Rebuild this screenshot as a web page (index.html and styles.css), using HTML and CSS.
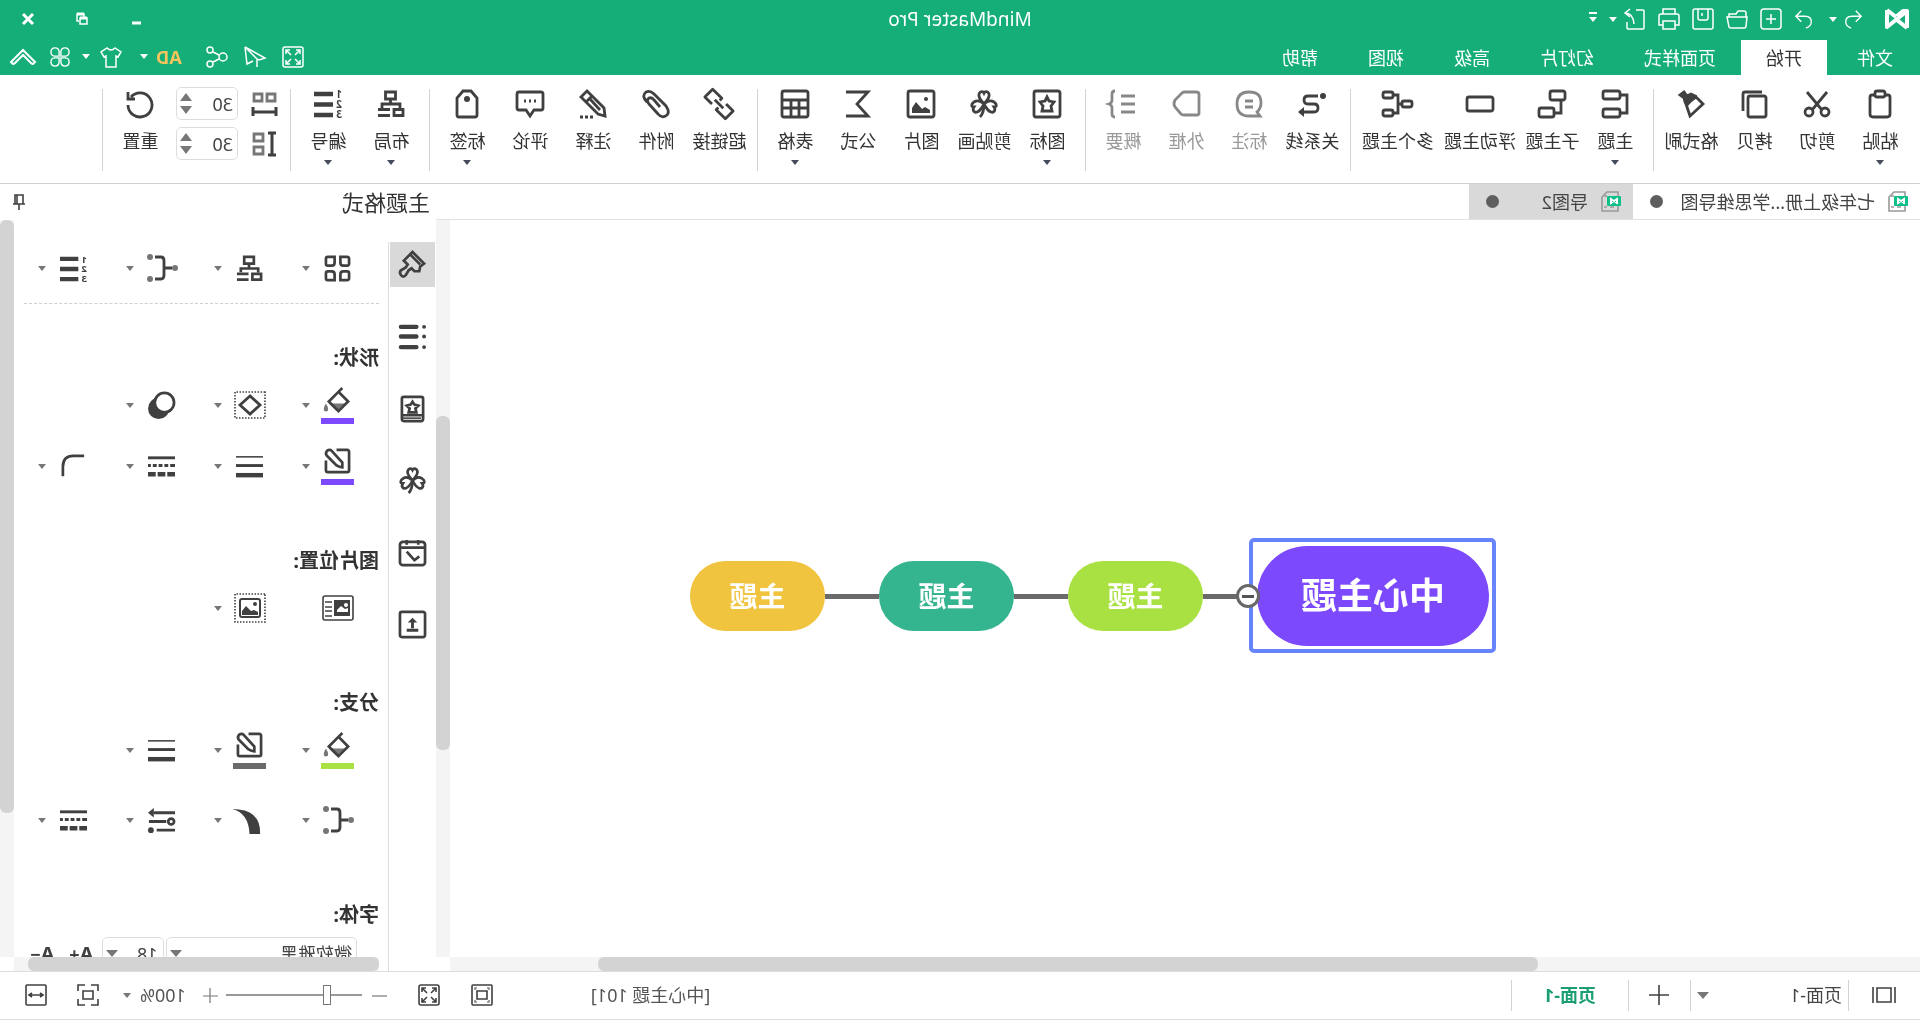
FILE: index.html
```html
<!DOCTYPE html>
<html lang="zh-CN">
<head>
<meta charset="utf-8">
<title>MindMaster Pro</title>
<link rel="stylesheet" href="styles.css">
</head>
<body>
<svg class="sprite" aria-hidden="true">
  <symbol id="i-layout" viewBox="0 0 28 28"><path d="M9.500 2h10v7h-10zM14.500 9v5M5 18v-4h18v4M2 19.500h9v6H2z"/><path d="M15 19.500h12M15 25.500h12"/></symbol>
  <symbol id="i-number" viewBox="0 0 28 28"><path class="thick" d="M9 4h19M9 14.500h19M9 25h19"/><text x="0" y="8">1</text><text x="0" y="18">2</text><text x="0" y="28">3</text></symbol>
  <symbol id="i-clover" viewBox="0 0 28 28"><path d="M14 14C11 10 8 8 9 4c1-3 4-3 5-1 1-2 4-2 5 1 1 4-2 6-5 10zM14 14c-3-3-7-4-10-2-3 2-3 5 0 5-2 3 0 6 3 5 3-1 5-4 7-8zM14 14c3-3 7-4 10-2 3 2 3 5 0 5 2 3 0 6-3 5-3-1-5-4-7-8z"/><path d="M14 14c0 5 1 10 4 13"/></symbol>
  <symbol id="i-bucket" viewBox="0 0 28 28"><path class="soft" d="M6 17h17l-8 8z"/><path d="M9 1l3 3 1 3M13 5L3 15l10 10 10-10L13 5z"/><path class="soft" d="M26 17q-3 5-2 7 2 3 4 0 1-2-2-7z"/></symbol>
  <symbol id="i-border" viewBox="0 0 28 28"><path d="M15 2H4Q2 2 2 4v19q0 2 2 2h20q2 0 2-2V13M20 3q2-2 5 0 2 3 0 5L15 18q-3 2-6 2v-5z"/></symbol>
  <symbol id="i-weights" viewBox="0 0 28 28"><path class="thin" d="M0 4h28"/><path class="w3" d="M0 13h28"/><path class="thick" d="M0 23h28"/></symbol>
  <symbol id="i-dashes" viewBox="0 0 28 28"><path class="w3" d="M0 5h28"/><path class="w3" d="M0 13h5M7 13h4M13 13h4M19 13h4M25 13h3"/><path class="thick" d="M0 22h8M10 22h8M20 22h8"/></symbol>
  <symbol id="i-branch" viewBox="0 0 30 28"><path d="M5 14h8M22 3h-6q-3 0-3 4v14q0 4 3 4h6"/><circle class="soft" cx="2" cy="14" r="3"/><circle class="soft" cx="27" cy="3" r="3"/><circle class="soft" cx="27" cy="25" r="3"/></symbol>
  <symbol id="i-doc" viewBox="0 0 20 22"><path class="page" d="M7 1h7l5 5v14H3V1z"/><path class="page" d="M7 16h4M14 16h3M14 5l3 0"/><rect class="badge" x="0" y="5" width="14" height="10" rx="1"/><path class="mark" d="M4 13V8l6 4V7M4 12l6-4v5"/></symbol>
  <symbol id="i-expand" viewBox="0 0 22 22"><rect x="1" y="1" width="20" height="20" rx="2"/><path d="M4 8V4h4M4 4l5 5M14 4h4v4M18 4l-5 5M4 14v4h4M4 18l5-5M18 14v4h-4M18 18l-5-5"/></symbol>
</svg>
<div class="window">
  <header class="top">
    <div class="titlebar">
      <div class="quick">
        <svg class="logo" viewBox="0 0 24 22"><path d="M2 20V3l20 16V2M2 3l4 0 6 5M2 20l10-8M22 2l-9 7"/></svg>
        <button aria-label="撤销"><svg viewBox="0 0 20 22"><path d="M7 2L1 8l6 6M1 8h10q7 0 7 6 0 5-6 7"/></svg></button>
        <i class="caret q1"></i>
        <button aria-label="重做"><svg viewBox="0 0 20 22"><path d="M13 2l6 6-6 6M19 8H9Q2 8 2 14q0 5 6 7"/></svg></button>
        <button class="q2" aria-label="新建"><svg viewBox="0 0 22 22"><rect x="1" y="1" width="20" height="20" rx="3"/><path d="M11 6v10M6 11h10"/></svg></button>
        <button aria-label="打开"><svg viewBox="0 0 22 22"><path d="M2 9V5q0-2 2-2h6l2 3h7v3M1 9h20l-2 10q0 1-2 1H4q-2 0-2-2z"/></svg></button>
        <button aria-label="保存"><svg viewBox="0 0 22 22"><rect x="1" y="1" width="20" height="20" rx="2"/><path d="M6 1v9q0 2 2 2h6q2 0 2-2V1M12 5v3"/></svg></button>
        <button aria-label="打印"><svg viewBox="0 0 22 22"><path d="M5 6V1h12v5M5 17H1V8q0-2 2-2h16q2 0 2 2v9h-4M5 13h12v8H5z"/></svg></button>
        <button aria-label="导出"><svg viewBox="0 0 22 22"><path d="M10 2H3q-1 0-1 1v17q0 1 1 1h15q1 0 1-1v-6M16 1l5 4-5 4M21 5Q13 5 12 16"/></svg></button>
        <i class="caret q3"></i>
        <i class="caret topped"></i>
      </div>
      <h1>MindMaster Pro</h1>
      <div class="wincontrols">
        <button aria-label="最小化"><svg viewBox="0 0 12 14"><path class="heavy" d="M1 11h9"/></svg></button>
        <button aria-label="还原"><svg viewBox="0 0 12 14"><path d="M1 6h7v6H1zM4 5V2h7v7H9"/><path class="heavy" d="M4 2h7M1 6h7"/></svg></button>
        <button aria-label="关闭"><svg viewBox="0 0 12 14"><path class="heavy" d="M1 2l10 10M11 2L1 12"/></svg></button>
      </div>
    </div>
    <div class="menubar">
      <nav class="menus">
        <a href="#">文件</a><a href="#" class="active">开始</a><a href="#">页面样式</a><a href="#">幻灯片</a><a href="#">高级</a><a href="#">视图</a><a href="#">帮助</a>
      </nav>
      <div class="tools">
        <button aria-label="全屏"><svg viewBox="0 0 22 22"><use href="#i-expand"/></svg></button>
        <button aria-label="发送"><svg viewBox="0 0 22 22"><path d="M21 1L1 12l6 2 2-1v8M21 1L9 13M21 1l-2 17-6-3"/></svg></button>
        <button aria-label="分享"><svg viewBox="0 0 22 22"><circle cx="5" cy="11" r="4"/><circle cx="18" cy="4" r="3"/><circle cx="18" cy="18" r="3"/><path d="M9 9l6-3M9 13l6 3"/></svg></button>
        <b class="ad">AD</b><i class="caret"></i>
        <button class="shirt" aria-label="主题"><svg viewBox="0 0 22 22"><path d="M7 2L1 6l3 5 2-1v11h10V10l2 1 3-5-6-4q-4 4-8 0z"/></svg></button>
        <i class="caret"></i>
        <button class="apps" aria-label="应用"><svg viewBox="0 0 22 22"><path d="M10 10H5a4.500 4.500 0 1 1 5-5zM12 10V5a4.500 4.500 0 1 1 5 5zM10 12v5a4.500 4.500 0 1 1-5-5zM12 12h5a4.500 4.500 0 1 1-5 5z"/></svg></button>
        <button class="fold" aria-label="收起"><svg viewBox="0 0 26 18"><path d="M1 14L13 2l12 12-2 2q-1 0-2-1l-8-8-8 8q-1 1-2 1z"/></svg></button>
      </div>
    </div>
  </header>

  <div class="ribbon">
    <div class="group">
      <button class="cmd"><svg viewBox="0 0 28 28"><path d="M9 5H6Q4 5 4 7v17q0 3 3 3h14q3 0 3-3V7q0-2-2-2h-3"/><rect x="9" y="1" width="10" height="6" rx="2"/></svg>粘贴<i class="caret"></i></button>
      <button class="cmd"><svg viewBox="0 0 28 28"><path d="M4 2l15 18M24 2L9 20"/><circle cx="6" cy="22" r="4"/><circle cx="22" cy="22" r="4"/></svg>剪切</button>
      <button class="cmd"><svg viewBox="0 0 28 28"><rect x="2" y="6" width="18" height="21" rx="2"/><path d="M6 2h17q2 0 2 2v17"/></svg>拷贝</button>
      <button class="cmd"><svg viewBox="0 0 28 28"><path d="M9 7L2 14l13 12 4-12z"/><path class="fill stroked" d="M10 6l8 9 2-3 1-4 4-3-4-3-3 4-4-2z"/></svg>格式刷</button>
    </div>
    <div class="group">
      <button class="cmd"><svg viewBox="0 0 28 28"><rect x="9" y="1" width="17" height="8" rx="2"/><rect x="9" y="19" width="17" height="8" rx="2"/><path d="M9 5H2v18h7"/></svg>主题<i class="caret"></i></button>
      <button class="cmd"><svg viewBox="0 0 28 28"><rect x="1" y="1" width="15" height="9" rx="2"/><rect x="12" y="18" width="15" height="9" rx="2"/><path d="M5 10v13h7"/></svg>子主题</button>
      <button class="cmd wide"><svg viewBox="0 0 28 28"><rect x="1" y="7" width="26" height="14" rx="2"/></svg>浮动主题</button>
      <button class="cmd wide"><svg viewBox="0 0 28 28"><rect x="0" y="11" width="10" height="6" rx="2"/><rect x="19" y="2" width="10" height="6" rx="2"/><rect x="19" y="20" width="10" height="6" rx="2"/><path d="M10 14h4M19 5h-5v18h5"/></svg>多个主题</button>
    </div>
    <div class="group">
      <button class="cmd"><svg viewBox="0 0 28 28"><circle class="fill" cx="3" cy="6" r="3"/><path d="M8 6h10q4 0 4 4t-4 4h-6q-4 0-4 4t4 4h12"/><path class="fill" d="M22 17l6 5-6 5z"/></svg>关系线</button>
      <button class="cmd" disabled><svg viewBox="0 0 28 28"><path d="M3 26l3-4Q2 18 2 13 2 2 14 2t12 12q0 12-12 12z"/><path d="M10 11h8M10 17h8"/></svg>标注</button>
      <button class="cmd" disabled><svg viewBox="0 0 28 28"><path d="M4 2h11q2 0 3 1l7 7q2 4 0 7l-6 7q-1 1-3 1H3q-2 0-2-2V4q0-2 3-2z"/></svg>外框</button>
      <button class="cmd" disabled><svg viewBox="0 0 28 28"><path d="M2 6h14M2 14h14M2 22h14M22 1q3 0 3 3v6q0 3 3 4-3 1-3 4v6q0 3-3 3"/></svg>概要</button>
    </div>
    <div class="group">
      <button class="cmd"><svg viewBox="0 0 28 28"><rect x="1" y="1" width="26" height="26" rx="2"/><path d="M14 7l2 4 5 1-3 4 1 5h-10l1-5-3-4 5-1z"/></svg>图标<i class="caret"></i></button>
      <button class="cmd"><svg viewBox="0 0 28 28"><use href="#i-clover"/></svg>剪贴画</button>
      <button class="cmd"><svg viewBox="0 0 28 28"><rect x="1" y="1" width="26" height="26" rx="2"/><path class="fill" d="M5 23v-3l5-3 3 2 6-7 4 6v5z"/><circle class="fill" cx="9" cy="9" r="2"/></svg>图片</button>
      <button class="cmd"><svg viewBox="0 0 28 28"><path d="M26 2H4l11 12L4 26h22"/></svg>公式</button>
      <button class="cmd"><svg viewBox="0 0 28 28"><rect x="1" y="1" width="26" height="26" rx="2"/><path d="M1 10h26M1 18h26M10 10v17M18 10v17"/></svg>表格<i class="caret"></i></button>
    </div>
    <div class="group">
      <button class="cmd"><svg viewBox="0 0 28 28"><path transform="rotate(-45 14 14)" stroke-linejoin="round" d="M12 17v3H-1V9h10M16 11V8h13v11H19M8 14h12"/></svg>超链接</button>
      <button class="cmd"><svg viewBox="0 0 28 28"><path d="M23 12q6-6 1-10-4-2-8 2L4 16q-4 6-1 9 5 4 9-1l9-10q3-4 0-6-3-1-5 2l-6 7"/></svg>附件</button>
      <button class="cmd"><svg viewBox="0 0 28 28"><path d="M20 1l6 6L9 24l-7 2 1-8zM15 6l6 6M17 9L7 20"/><path d="M14 27h3M19 27h3M24 27h3"/></svg>注释</button>
      <button class="cmd"><svg viewBox="0 0 28 28"><path d="M3 2h22q2 0 2 2v14q0 2-2 2h-7l-4 6-4-6H3q-2 0-2-2V4q0-2 2-2z"/><path class="dots" d="M8 11h2M13 11h2M18 11h2"/></svg>评论</button>
      <button class="cmd"><svg viewBox="0 0 28 28"><path d="M10 1h8l6 7v17q0 2-2 2H6q-2 0-2-2V8z"/><circle class="fill" cx="14" cy="9" r="3"/></svg>标签<i class="caret"></i></button>
    </div>
    <div class="group">
      <button class="cmd"><svg viewBox="0 0 28 28"><use href="#i-layout"/></svg>布局<i class="caret"></i></button>
      <button class="cmd"><svg viewBox="0 0 28 28"><use href="#i-number"/></svg>编号<i class="caret"></i></button>
    </div>
    <div class="group">
      <div class="spacing">
        <label class="spin"><svg viewBox="0 0 26 26"><path class="grey" d="M2 3h8v7H2zM15 3h8v7h-8z"/><path class="w3" d="M1 16v9M24 16v9M1 21h23"/></svg><span><input type="text" value="30" aria-label="水平间距"><i class="caret up"></i><i class="caret down"></i></span></label>
        <label class="spin"><svg viewBox="0 0 26 26"><path class="grey" d="M14 3h9v7h-9zM14 16h9v7h-9z"/><path class="w3" d="M1 2h8M1 24h8M5 2v22"/></svg><span><input type="text" value="30" aria-label="垂直间距"><i class="caret up"></i><i class="caret down"></i></span></label>
      </div>
      <button class="cmd"><svg viewBox="0 0 28 28"><path d="M23 7A12 12 0 1 0 26 15M26 2v7h-7"/></svg>重置</button>
    </div>
  </div>

  <main class="main">
    <section class="work">
      <div class="doctabs">
        <button class="doctab first"><svg viewBox="0 0 20 22"><use href="#i-doc"/></svg><span>七年级上册...学思维导图</span><i class="dot"></i></button>
        <button class="doctab second"><svg viewBox="0 0 20 22"><use href="#i-doc"/></svg><span>导图2</span><i class="dot"></i></button>
      </div>
      <div class="canvasgrid">
        <div class="canvas">
          <div class="mindmap">
            <div class="node central">中心主题</div>
            <i class="link short"></i><div class="node lime">主题</div>
            <i class="link"></i><div class="node teal">主题</div>
            <i class="link"></i><div class="node gold">主题</div>
            <div class="selection"></div>
            <button class="collapse" aria-label="折叠"></button>
          </div>
        </div>
        <div class="vtrack"><div class="thumb canvas-v"></div></div>
        <div class="htrack"><div class="thumb canvas-h"></div></div>
      </div>
    </section>

    <aside class="panel">
      <div class="panelhead"><h2>主题格式</h2><button aria-label="固定"><svg viewBox="0 0 14 16"><path d="M3 1h8v9H3zM1 10h12M7 10v6M9 1v9"/></svg></button></div>
      <div class="panelbody">
        <div class="side">
          <button class="on" aria-label="格式"><svg viewBox="0 0 28 28"><path d="M14 1L2 13l4 3 1 5 5 0 3-3 3 2 3 5q3 3 5 0t0-5l-5-3-2-3 4-4z"/><path d="M16 4L6 14"/></svg></button>
          <button aria-label="大纲"><svg viewBox="0 0 28 28"><path class="thick round" d="M10 4h16M10 14h16M10 25h16"/><circle class="fill" cx="2" cy="4" r="2"/><circle class="fill" cx="2" cy="14" r="2"/><circle class="fill" cx="2" cy="25" r="2"/></svg></button>
          <button aria-label="图标"><svg viewBox="0 0 28 28"><rect x="3" y="2" width="22" height="25" rx="2"/><path d="M3 21h22M14 7l2 3 4 1-3 3 1 4h-8l1-4-3-3 4-1z"/><path class="thin" d="M5 24h20"/></svg></button>
          <button aria-label="剪贴画"><svg viewBox="0 0 28 28"><use href="#i-clover"/></svg></button>
          <button aria-label="任务"><svg viewBox="0 0 28 28"><rect x="1" y="3" width="26" height="24" rx="3"/><path d="M1 9h26M8 1v5M20 1v5M7 18l5 4 8-9"/></svg></button>
          <button aria-label="导出"><svg viewBox="0 0 28 28"><rect x="1" y="1" width="26" height="26" rx="2"/><path class="w3" d="M8 20h12M14 18V9"/><path class="fill" d="M9 12l5-5 5 5z"/></svg></button>
        </div>
        <div class="props">
          <div class="row">
            <button class="tool" aria-label="样式"><span><svg viewBox="0 0 28 28"><path d="M2 4q0-2 2-2h7v6q0 3-3 3H4q-2 0-2-2zM17 2h7q2 0 2 2v5q0 2-2 2h-4q-3 0-3-3zM4 17h4q3 0 3 3v6H4q-2 0-2-2v-5q0-2 2-2zM20 17h4q2 0 2 2v5q0 2-2 2h-7v-6q0-3 3-3z"/></svg></span><i class="caret"></i></button>
            <button class="tool" aria-label="布局"><span><svg viewBox="0 0 28 28"><use href="#i-layout"/></svg></span><i class="caret"></i></button>
            <button class="tool" aria-label="连线"><span><svg class="w30" viewBox="0 0 30 28"><use href="#i-branch"/></svg></span><i class="caret"></i></button>
            <button class="tool" aria-label="编号"><span><svg viewBox="0 0 28 28"><use href="#i-number"/></svg></span><i class="caret"></i></button>
          </div>
          <hr>
          <h3>形状:</h3>
          <div class="row">
            <button class="tool" aria-label="填充"><span><svg viewBox="0 0 28 28"><use href="#i-bucket"/></svg><b class="bar violet"></b></span><i class="caret"></i></button>
            <button class="tool" aria-label="形状"><span><svg class="w32" viewBox="0 0 32 28"><rect class="dotline" x="1" y="1" width="30" height="26"/><path d="M16 5l10 9-10 9-10-9z"/></svg></span><i class="caret"></i></button>
            <button class="tool" aria-label="阴影"><span><svg viewBox="0 0 28 28"><circle class="fill" cx="17" cy="17" r="11"/><circle class="paper" cx="11" cy="11" r="10"/></svg></span><i class="caret"></i></button>
          </div>
          <div class="row near">
            <button class="tool" aria-label="边框颜色"><span><svg viewBox="0 0 28 28"><use href="#i-border"/></svg><b class="bar violet"></b></span><i class="caret"></i></button>
            <button class="tool" aria-label="边框粗细"><span><svg viewBox="0 0 28 28"><use href="#i-weights"/></svg></span><i class="caret"></i></button>
            <button class="tool" aria-label="边框线型"><span><svg viewBox="0 0 28 28"><use href="#i-dashes"/></svg></span><i class="caret"></i></button>
            <button class="tool" aria-label="圆角"><span><svg viewBox="0 0 28 28"><path d="M3 3h11q11 0 11 11v10"/></svg></span><i class="caret"></i></button>
          </div>
          <h3>图片位置:</h3>
          <div class="row">
            <button class="tool" aria-label="图片布局"><span><svg class="w32" viewBox="0 0 32 28"><rect class="thin" x="1" y="2" width="30" height="24" rx="2"/><path class="fill" d="M4 6h16v16H4z"/><path class="page-fill" d="M6 18v-4l3 1 4-3 4 4v2z"/><circle class="page-fill" cx="8" cy="11" r="2"/><path class="thin" d="M22 8h7M22 13h7M22 17h7M22 22h7"/></svg></span></button>
            <button class="tool" aria-label="图片大小"><span><svg class="w32" viewBox="0 0 32 28"><rect class="dotline" x="1" y="0" width="30" height="28"/><rect class="thin2" x="6" y="5" width="20" height="18" rx="2"/><path class="fill" d="M8 21v-3l4-2 3 1 5-5 4 5v4z"/><circle class="fill" cx="11" cy="10" r="2"/></svg></span><i class="caret"></i></button>
          </div>
          <h3>分支:</h3>
          <div class="row">
            <button class="tool" aria-label="分支填充"><span><svg viewBox="0 0 28 28"><use href="#i-bucket"/></svg><b class="bar limebar"></b></span><i class="caret"></i></button>
            <button class="tool" aria-label="分支颜色"><span><svg viewBox="0 0 28 28"><use href="#i-border"/></svg><b class="bar greybar"></b></span><i class="caret"></i></button>
            <button class="tool" aria-label="分支粗细"><span><svg viewBox="0 0 28 28"><use href="#i-weights"/></svg></span><i class="caret"></i></button>
          </div>
          <div class="row far">
            <button class="tool" aria-label="分支形状"><span><svg class="w30" viewBox="0 0 30 28"><use href="#i-branch"/></svg></span><i class="caret"></i></button>
            <button class="tool" aria-label="渐变线"><span><svg viewBox="0 0 28 28"><path class="fill" d="M3 28Q2 2 32 2 15 6 14 28z"/></svg></span><i class="caret"></i></button>
            <button class="tool" aria-label="箭头"><span><svg viewBox="0 0 28 28"><path class="w3" d="M0 6h22M9 15h18M0 24h19"/><circle cx="4" cy="15" r="3"/><circle class="fill" cx="25" cy="24" r="3"/><path class="fill" d="M22 1l6 5-6 5z"/></svg></span><i class="caret"></i></button>
            <button class="tool" aria-label="分支线型"><span><svg viewBox="0 0 28 28"><use href="#i-dashes"/></svg></span><i class="caret"></i></button>
          </div>
          <h3>字体:</h3>
          <div class="fonts">
            <span class="pick family"><select aria-label="字体"><option>微软雅黑</option></select><i class="caret"></i></span>
            <span class="pick size"><select aria-label="字号"><option>18</option></select><i class="caret"></i></span>
            <button class="sizer" aria-label="增大"><b>A</b><sup>+</sup></button>
            <button class="sizer" aria-label="减小"><b>A</b><sup>−</sup></button>
          </div>
        </div>
        <div class="vtrack"><div class="thumb panel-v"></div></div>
        <div class="htrack"><div class="thumb panel-h"></div></div>
      </div>
    </aside>
  </main>

  <footer class="status">
    <button class="s-outline" aria-label="页面列表"><svg viewBox="0 0 24 18"><path d="M1 1v16M23 1v16M5 2h14v14H5z"/></svg></button>
    <span class="pagepick"><select aria-label="页面"><option>页面-1</option></select><i class="caret"></i></span>
    <button class="s-add" aria-label="添加页面"><svg viewBox="0 0 20 20"><path d="M10 0v20M0 10h20"/></svg></button>
    <a href="#" class="s-page">页面-1</a>
    <div class="s-right">
      <span class="s-info">[中心主题 101]</span>
      <button class="s-fit" aria-label="适应"><svg viewBox="0 0 22 22"><rect x="1" y="1" width="20" height="20" rx="1"/><path d="M6 7h10v8H6z"/><path class="grey1" d="M4 6V4h2M16 4h2v2M4 16v2h2M16 18h2v-2"/></svg></button>
      <button class="s-full" aria-label="全屏"><svg viewBox="0 0 22 22"><use href="#i-expand"/></svg></button>
      <button class="s-minus" aria-label="缩小"><svg viewBox="0 0 15 15"><path class="hair" d="M0 8h15"/></svg></button>
      <input class="zoom" type="range" min="0" max="100" value="24" aria-label="缩放">
      <button class="s-plus" aria-label="放大"><svg viewBox="0 0 15 15"><path class="hair" d="M0 8h15M8 0v15"/></svg></button>
      <button class="s-pct">100%<i class="caret"></i></button>
      <button class="s-sel" aria-label="选区"><svg viewBox="0 0 22 22"><path d="M1 7V1h7M14 1h7v6M1 15v6h7M14 21h7v-6M6 7h10v8H6z"/></svg></button>
      <button class="s-width" aria-label="适合宽度"><svg viewBox="0 0 22 22"><rect x="1" y="1" width="20" height="20" rx="1"/><path d="M5 11h12M7 9l-3 2 3 2M15 9l3 2-3 2"/></svg></button>
    </div>
  </footer>
</div>
</body>
</html>
```
FILE: styles.css
```css
* { box-sizing: border-box; }
body {
  margin: 0;
  background: #fff;
  color: #333;
  font: 18px/24px "Noto Sans", "Noto Sans CJK SC", sans-serif;
  overflow: hidden;
}
/* The whole window is shown mirrored. */
.window {
  display: flex;
  flex-direction: column;
  height: 100vh;
  transform: scaleX(-1);
}
button {
  display: flex;
  align-items: center;
  justify-content: center;
  padding: 0;
  border: 0;
  background: none;
  color: inherit;
  font: inherit;
}
a { color: inherit; text-decoration: none; }
h1, h2, h3 { margin: 0; font-weight: 400; }
.sprite { position: absolute; width: 0; height: 0; }
svg {
  flex: none;
  overflow: visible;
  fill: none;
  stroke: #404040;
  stroke-width: 2.8px;
}
symbol { overflow: visible; }
symbol text { fill: #404040; stroke: none; font-size: 10px; font-weight: 700; }
.fill { fill: #404040; stroke: none; }
.fill.stroked { stroke: #404040; }
.soft { fill: #777; stroke: none; }
.paper { fill: #fff; }
.page-fill { fill: #fff; stroke: none; }
.dotline { stroke-width: 1.6px; stroke-dasharray: 1.5 1.5; }
.hair { stroke: #777; stroke-width: 1.2px; }
.thin { stroke-width: 1.6px; }
.thin2 { stroke-width: 2px; }
.w3 { stroke-width: 3px; }
.thick { stroke-width: 4.6px; }
.round { stroke-linecap: round; }
.grey { stroke: #777; stroke-width: 2.8px; }
.grey1 { stroke: #888; }
.caret {
  flex: none;
  width: 0;
  height: 0;
  border: 4px solid transparent;
  border-top: 5px solid #777;
  border-bottom: 0;
}

/* Green header */
.top { background: #15ae79; color: #fff; }
.top svg { width: 22px; height: 22px; stroke: #fff; stroke-width: 1.5px; }
.top .caret { border-top-color: #fff; }
.titlebar {
  display: grid;
  grid-template-columns: 1fr auto 1fr;
  height: 38px;
  align-items: center;
}
.titlebar h1 { font-size: 19px; }
.quick { display: flex; align-items: center; gap: 12px; padding-left: 11px; }
.quick .logo { width: 24px; stroke-width: 4px; stroke-linejoin: round; }
.quick button:nth-of-type(1) { margin-left: 10px; }
.quick button:nth-of-type(-n+2) svg { width: 20px; height: 20px; }
.q1 { margin: 0 3px 0 -6px; }
.q3 { margin-left: -5px; }
.topped { position: relative; }
.topped::before {
  content: "";
  position: absolute;
  left: -4px;
  top: -10px;
  width: 8px;
  height: 2px;
  background: #fff;
}
.wincontrols { display: flex; justify-content: flex-end; gap: 42px; padding-right: 22px; }
.wincontrols svg { width: 12px; height: 14px; }
.wincontrols .heavy { stroke-width: 3px; }
.menubar { display: flex; justify-content: space-between; height: 37px; }
.menus { display: flex; padding-left: 2px; align-items: flex-end; }
.menus a { padding: 6px 25px 5px; }
.menus a:first-child { margin-right: 5px; }
.menus .active { background: #fff; color: #333; }
.tools { display: flex; align-items: center; gap: 16px; padding-right: 10px; }
.ad { margin-left: 8px; color: #f5c55c; font-family: "Open Sans", sans-serif; }
.tools .caret { margin-left: -8px; }
.shirt { margin: 0 2px; }
.apps svg { width: 20px; }
.apps { margin: 0 -2px 0 -4px; }
.tools .fold svg { width: 26px; height: 18px; stroke-width: 2px; }

/* Ribbon */
.ribbon {
  display: flex;
  align-items: flex-start;
  height: 109px;
  padding: 14px 0 0 8px;
  border-bottom: 1px solid #d0d0d0;
}
.group {
  display: flex;
  height: 82px;
  padding-right: 6px;
  margin-right: 6px;
  border-right: 1px solid #d3d3d3;
}
.cmd {
  flex-direction: column;
  justify-content: flex-start;
  width: 63px;
  padding-top: 1px;
  white-space: nowrap;
}
.cmd.wide { width: 82px; }
.cmd svg { width: 28px; height: 28px; margin-bottom: 11px; }
.cmd .caret { margin-top: 7px; border-top-color: #454b5c; }
.cmd:disabled { color: #999; }
.cmd:disabled svg { stroke: #888; }
.spacing { display: flex; flex-direction: column; gap: 7px; padding: 0 4px 0 7px; margin-top: -2px; }
.spin { display: flex; align-items: center; gap: 13px; }
.spin svg { width: 26px; height: 26px; }
.spin span {
  display: grid;
  grid-template-columns: 1fr 18px;
  align-items: center;
  justify-items: center;
  width: 62px;
  height: 33px;
  padding: 3px 0;
  border: 1px solid #ddd;
  border-radius: 5px;
}
.spin input {
  grid-row: span 2;
  width: 40px;
  padding: 0 0 0 3px;
  border: 0;
  background: none;
  color: #444;
  font: inherit;
}
.spin .caret { border-width: 8px 6px 0; }
.spin .up { transform: rotate(180deg); }

/* Document area */
.main { display: flex; flex: 1; min-height: 0; }
.work { display: flex; flex: 1; min-width: 0; flex-direction: column; }
.doctabs { display: flex; height: 36px; border-bottom: 1px solid #e2e2e2; }
.doctab { gap: 13px; padding: 0 17px 0 12px; color: #444; }
.doctab span { flex: 1; text-align: left; white-space: nowrap; }
.doctab svg { width: 20px; height: 22px; }
.first { width: 287px; }
.second { width: 164px; background: #d9d9d9; }
.page { stroke: #999; stroke-width: 1.6px; }
.badge { fill: #10c08a; stroke: none; }
.mark { stroke: #fff; stroke-width: 2px; }
.dot { width: 13px; height: 13px; border-radius: 50%; background: #5e5e5e; }
.canvasgrid {
  display: grid;
  flex: 1;
  grid-template: 1fr 14px / 1fr 14px;
}
.canvas { position: relative; overflow: hidden; }
.vtrack, .htrack { background: #f4f4f4; }
.thumb { border-radius: 6px; background: #d3d3d3; }
.canvas-v { width: 14px; height: 334px; margin-top: 196px; }
.canvas-h { width: 940px; height: 14px; margin-left: 382px; }
.mindmap {
  position: absolute;
  left: 431px;
  top: 326px;
  display: flex;
  align-items: center;
  color: #fff;
}
.node {
  display: flex;
  align-items: center;
  justify-content: center;
  width: 135px;
  height: 70px;
  border-radius: 35px;
  font-size: 28px;
  font-weight: 700;
}
.central { width: 232px; height: 100px; border-radius: 50px; background: #7c4afc; font-size: 36px; }
.lime { background: #a8e141; }
.teal { background: #35b58f; }
.gold { background: #f0c43e; }
.link { width: 54px; height: 5px; background: #6a6a6a; }
.selection {
  position: absolute;
  left: -7px;
  top: -8px;
  width: 247px;
  height: 115px;
  border: 4px solid #6784fb;
  border-radius: 5px;
}
.collapse {
  position: absolute;
  left: 229px;
  top: 38px;
  width: 24px;
  height: 24px;
  border: 3px solid #686868;
  border-radius: 50%;
  background: #fff;
}
.collapse::before { content: ""; width: 12px; height: 3px; background: #555; }

/* Format panel */
.panel { display: flex; flex-direction: column; width: 436px; }
.panelhead {
  display: flex;
  justify-content: space-between;
  align-items: center;
  height: 36px;
  padding: 0 12px 0 6px;
}
.panelhead h2 { font-size: 22px; }
.panelhead svg { width: 14px; height: 16px; stroke-width: 1.6px; }
.panelbody {
  display: grid;
  flex: 1;
  min-height: 0;
  grid-template: minmax(0, 1fr) 14px / 48px 1fr 14px;
}
.side {
  display: flex;
  grid-row: span 2;
  flex-direction: column;
  gap: 27px;
  margin-top: 22px;
  padding-left: 1px;
  border-right: 1px solid #ddd;
}
.side button { width: 45px; height: 45px; }
.side svg { width: 27px; height: 27px; }
.side .on { background: #d9d9d9; }
.props { overflow: hidden; padding: 29px 10px 0 9px; }
.row { display: grid; grid-template-columns: repeat(4, 88px); height: 38px; margin-right: -20px; padding-left: 20px; }
.near { margin-top: 23px; }
.far { margin-top: 32px; }
.props hr { margin: 16px 0 42px; border: 0; border-top: 1px dashed #d0d0d0; }
.props h3 { margin: 64px 0 16px; font-size: 20px; font-weight: 700; }
.props hr + h3 { margin-top: 0; }
.tool { justify-content: flex-start; gap: 7px; }
.tool > span {
  display: flex;
  flex-direction: column;
  align-items: center;
  justify-content: center;
  width: 42px;
  height: 38px;
}
.tool svg { width: 27px; height: 27px; }
.tool svg.w30 { width: 30px; height: 28px; }
.tool svg.w32 { width: 32px; height: 28px; }
.bar { width: 33px; height: 6px; margin-top: 4px; }
.violet { background: #7c4afc; }
.limebar { background: #a8e141; }
.greybar { background: #6a6a6a; }
.fonts { display: flex; gap: 2px; margin-top: -6px; padding-left: 22px; }
.pick {
  display: flex;
  align-items: center;
  height: 33px;
  padding-right: 3px;
  border: 1px solid #ddd;
  border-radius: 5px;
}
select {
  flex: 1;
  min-width: 0;
  padding: 0;
  border: 0;
  background: none;
  color: #444;
  font: inherit;
  appearance: none;
}
.pick select { padding-left: 4px; }
.family { width: 192px; }
.size { width: 62px; }
.size select { padding-left: 5px; }
.pick .caret, .pagepick .caret { border-width: 7px 6px 0; }
.sizer { width: 37px; font-size: 20px; color: #404040; }
.sizer sup { font-size: 18px; line-height: 18px; font-weight: 700; }
.panel-v { width: 14px; height: 593px; }
.panel .htrack { grid-column: 2 / 3; margin-left: 9px; }
.panel-h { width: 351px; height: 14px; }

/* Status bar */
.status {
  display: flex;
  align-items: center;
  height: 49px;
  padding-bottom: 2px;
  border-top: 1px solid #ddd;
  box-shadow: inset 0 -1px #ddd;
}
.status svg { width: 22px; height: 22px; stroke-width: 1.6px; }
.status > * { flex: none; height: 31px; border-right: 1px solid #d3d3d3; }
.status .s-outline { width: 72px; }
.s-outline svg { width: 24px; height: 18px; }
.pagepick { display: flex; align-items: center; width: 158px; padding: 0 6px; }
.s-add { width: 62px; }
.status .s-add svg { width: 20px; height: 20px; }
.s-page { width: 117px; padding-top: 3px; color: #1b9e72; font-weight: 700; text-align: center; }
.status .s-right {
  display: flex;
  flex: 1;
  align-items: center;
  justify-content: flex-end;
  padding-right: 25px;
  border: 0;
}
.s-info { margin-right: 98px; color: #555; }
.s-full { margin: 0 31px; }
.status .s-minus svg, .status .s-plus svg { width: 15px; height: 15px; }
.zoom {
  width: 136px;
  height: 20px;
  margin: 0 8px 0 10px;
  appearance: none;
  background: linear-gradient(#999, #999) center / 100% 2px no-repeat;
}
.zoom::-webkit-slider-thumb {
  appearance: none;
  width: 8px;
  height: 20px;
  border: 1px solid #777;
  background: #fff;
}
.s-pct { gap: 9px; margin: 0 24px 0 17px; color: #555; }
.s-sel { margin-right: 30px; }
```
